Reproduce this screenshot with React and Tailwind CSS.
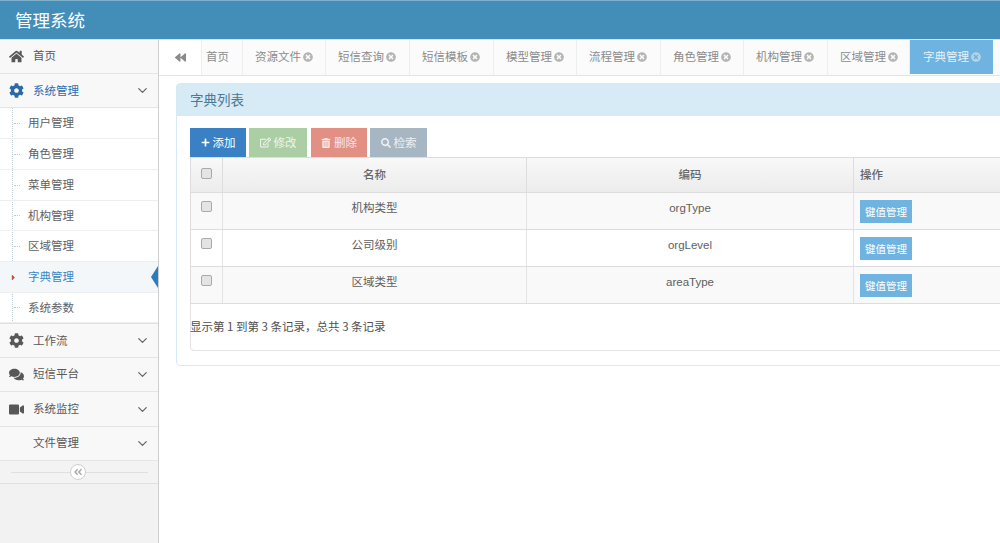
import React from 'react';
import {
  FaHome, FaCog, FaComments, FaVideo, FaBackward, FaPlus, FaRegEdit, FaTrashAlt,
  FaSearch, FaAngleDoubleLeft, FaTimesCircle, FaCaretRight,
} from 'react-icons/fa';
import { FiChevronDown } from 'react-icons/fi';

const subMenus = [
  ['用户管理', 'h-[31px]'],
  ['角色管理', 'h-[31px]'],
  ['菜单管理', 'h-[31px]'],
  ['机构管理', 'h-[30px]'],
  ['区域管理', 'h-[31px]'],
  ['字典管理', 'h-[31px]'],
  ['系统参数', 'h-[30px]'],
];

const tabs = [
  ['资源文件', 'w-[83px]'],
  ['短信查询', 'w-[84px]'],
  ['短信模板', 'w-[84px]'],
  ['模型管理', 'w-[83px]'],
  ['流程管理', 'w-[84px]'],
  ['角色管理', 'w-[83px]'],
  ['机构管理', 'w-[84px]'],
  ['区域管理', 'w-[82px]'],
];

const rows = [
  ['机构类型', 'orgType', 'bg-[#f9f9f9]'],
  ['公司级别', 'orgLevel', 'bg-white'],
  ['区域类型', 'areaType', 'bg-[#f9f9f9]'],
];

function MenuItem({ icon, label, arrow, active, lift, height = 'h-[34px]' }) {
  return (
    <div className={`flex items-center ${height} bg-[#f8f8f8] border-b border-[#e5e5e5] ${active ? 'text-[#2b6cb0]' : 'text-[#585858]'}`}>
      <div className={`w-[33px] flex justify-center text-[15px] shrink-0 ${active ? 'text-[#2b6aa8]' : 'text-[#585858]'}`}>{icon}</div>
      <span className={`text-[11.5px] ${lift ? 'pb-[2px]' : ''}`}>{label}</span>
      {arrow && <FiChevronDown className="ml-auto mr-[8px] text-[15px] text-[#666]" />}
    </div>
  );
}

function ToolButton({ color, icon, label, width, dim }) {
  return (
    <button className={`${width} h-[29px] ${color} flex items-center justify-center gap-[3px] text-[11.5px] ${dim ? 'text-white/80' : 'text-white'}`}>
      {icon}
      {label}
    </button>
  );
}

function Checkbox() {
  return <div className="w-[11px] h-[11px] rounded-[2px] border border-[#a9a9a9] bg-[#e4e4e4]" />;
}

export default function App() {
  return (
    <div className="w-[1000px] h-[543px] overflow-hidden bg-white font-['Noto_Sans_CJK_SC','Liberation_Sans',sans-serif] flex flex-col">
      <header className="h-[39px] shrink-0 bg-[#438eb9] border-t border-[#7fb0cc] flex items-center pl-[15px] text-white text-[17.5px]">
        管理系统
      </header>
      <div className="flex flex-1 min-h-0 border-t border-[#d5e3ec]">
        <aside className="w-[159px] shrink-0 bg-[#f2f2f2] border-r border-[#cfcfcf]">
          <MenuItem icon={<FaHome />} label="首页" lift />
          <MenuItem icon={<FaCog />} label="系统管理" arrow active />
          <div className="relative bg-white">
            <div className="absolute left-[12px] top-0 bottom-0 border-l border-dotted border-[#bccbd8]" />
            {subMenus.map(([label, h]) => {
              const on = label === '字典管理';
              return (
                <div key={label} className={`relative ${h} flex items-center pl-[28px] text-[11.5px] border-b border-[#eeeeee] ${on ? 'bg-[#f4f7fa] text-[#3a87c5]' : 'text-[#616161]'}`}>
                  {on ? (
                    <FaCaretRight className="absolute left-[9px] text-[9px] text-[#c8502c]" />
                  ) : (
                    <div className="absolute left-[14px] w-[6px] border-t border-dotted border-[#bccbd8]" />
                  )}
                  {label}
                  {on && <div className="absolute right-0 w-0 h-0 border-y-[11px] border-y-transparent border-r-[7px] border-r-[#2b7dbc]" />}
                </div>
              );
            })}
          </div>
          <div className="border-t border-[#e0e0e0]" />
          <MenuItem icon={<FaCog />} label="工作流" arrow />
          <MenuItem icon={<FaComments />} label="短信平台" arrow lift />
          <MenuItem icon={<FaVideo />} label="系统监控" arrow height="h-[35px]" />
          <MenuItem label="文件管理" arrow lift />
          <div className="relative h-[23px] bg-[#f3f3f3] border-b border-[#e0e0e0] flex items-center justify-center">
            <div className="w-[137px] border-t border-[#e0e0e0]" />
            <div className="absolute left-[70px] top-[3px] w-[16px] h-[16px] rounded-full bg-white border border-[#cfcfcf] flex items-center justify-center">
              <FaAngleDoubleLeft className="text-[10px] text-[#aaa]" />
            </div>
          </div>
        </aside>

        <main className="flex-1 min-w-0 flex flex-col">
          <div className="h-[36px] shrink-0 flex bg-[#fbfbfb] border-b border-[#e4e4e4]">
            <div className="w-[43px] shrink-0 bg-white flex items-center justify-center border-r border-[#eeeeee]">
              <FaBackward className="text-[11px] text-[#8a8a8a]" />
            </div>
            <div className="w-[41px] shrink-0 flex items-center pl-[4px] pb-[2px] text-[11.5px] text-[#8b8b8b] border-r border-[#eeeeee]">首页</div>
            {tabs.map(([label, w]) => (
              <div key={label} className={`${w} shrink-0 flex items-center pl-[12px] pb-[2px] gap-[2px] text-[11.5px] text-[#8b8b8b] border-r border-[#eeeeee]`}>
                {label}
                <FaTimesCircle className="text-[10px] text-[#b5b5b5]" />
              </div>
            ))}
            <div className="w-[83px] h-[34px] shrink-0 flex items-center pl-[13px] gap-[2px] text-[11.5px] text-[#e6f2fa] bg-[#6fb3e0]">
              字典管理
              <FaTimesCircle className="text-[10px] text-[#b5d4e8]" />
            </div>
          </div>

          <div className="pl-[17px] pt-[7px]">
            <section className="w-[900px] rounded-[4px] border border-[#d5eaf3] h-[283px]">
              <div className="h-[32px] bg-[#d6ebf5] flex items-center pl-[13px] pb-px text-[13.5px] text-[#4a7a96]">字典列表</div>
              <div className="pl-[13px] pt-[12px]">
                <div className="w-[850px] rounded-b-[4px] border-b border-[#e4e4e4] shadow-[inset_1px_0_0_#e4e4e4] h-[223px]">
                  <div className="flex gap-[3px] bg-white">
                    <ToolButton color="bg-[#3a80c4]" icon={<FaPlus className="text-[9px]" />} label="添加" width="w-[56px]" />
                    <ToolButton color="bg-[#abcea5]" icon={<FaRegEdit className="text-[11px]" />} label="修改" width="w-[58px]" dim />
                    <ToolButton color="bg-[#e28f84]" icon={<FaTrashAlt className="text-[10px]" />} label="删除" width="w-[56px] ml-px" dim />
                    <ToolButton color="bg-[#a6b6c2]" icon={<FaSearch className="text-[10px]" />} label="检索" width="w-[57px]" dim />
                  </div>
                  <div className="flex h-[36px] border border-r-0 border-[#dddddd] bg-gradient-to-b from-[#f8f8f8] to-[#ececec] text-[11.5px] text-[#666] font-medium">
                    <div className="w-[32px] flex justify-center pt-[10px] border-r border-[#dddddd]"><Checkbox /></div>
                    <div className="w-[304px] flex items-center justify-center border-r border-[#dddddd]">名称</div>
                    <div className="w-[327px] flex items-center justify-center border-r border-[#dddddd]">编码</div>
                    <div className="flex-1 flex items-center pl-[6px]">操作</div>
                  </div>
                  {rows.map(([name, code, bg]) => (
                    <div key={code} className={`flex h-[37px] border-b border-l border-[#dddddd] text-[11.5px] text-[#5e5e5e] ${bg}`}>
                      <div className="w-[32px] flex justify-center pt-[8px] border-r border-[#e4e4e4]"><Checkbox /></div>
                      <div className="w-[304px] flex justify-center pt-[6px] border-r border-[#e4e4e4]">{name}</div>
                      <div className="w-[327px] flex justify-center pt-[7px] border-r border-[#e4e4e4] font-['Liberation_Sans',sans-serif]">{code}</div>
                      <div className="flex-1 pl-[6px] pt-[7px]">
                        <button className="w-[52px] h-[23px] bg-[#6fb3e0] text-white text-[10.5px]">键值管理</button>
                      </div>
                    </div>
                  ))}
                  <div className="pt-[14px] text-[11.5px] text-[#4f4f4f]">显示第 1 到第 3 条记录，总共 3 条记录</div>
                </div>
              </div>
            </section>
          </div>
        </main>
      </div>
    </div>
  );
}
